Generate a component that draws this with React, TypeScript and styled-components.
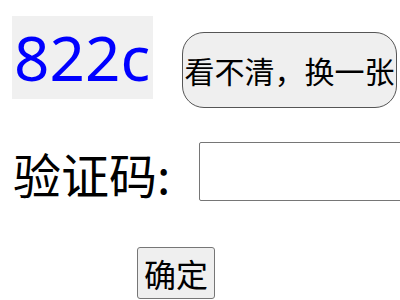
import React from "react";
import styled, { createGlobalStyle } from "styled-components";

const Global = createGlobalStyle`
  html, body { margin: 0; padding: 0; background: #fff; overflow: hidden; }
  body { font-family: "Noto Sans CJK SC", "Noto Sans", sans-serif; }
`;

const Page = styled.div`
  width: 400px;
  height: 300px;
  overflow: hidden;
  padding: 16px 0 0 12px;
  box-sizing: border-box;
  display: flex;
  flex-direction: column;
`;

const CaptchaRow = styled.div`
  display: flex;
  align-items: flex-start;
`;

const CaptchaImage = styled.div`
  width: 141px;
  height: 83px;
  background: #f0f0f0;
  color: #0000ff;
  font-family: "Noto Sans", "Open Sans", sans-serif;
  font-size: 62px;
  line-height: 83px;
  padding-left: 2px;
  box-sizing: border-box;
  white-space: nowrap;
  flex-shrink: 0;
`;

const RefreshButton = styled.button`
  margin: 16px 0 0 29px;
  width: 215px;
  height: 76px;
  flex-shrink: 0;
  padding: 0;
  border: 1px solid #555;
  border-radius: 22px;
  background: #efefef;
  color: #000;
  font-family: "Noto Sans CJK SC", sans-serif;
  font-size: 30px;
  line-height: 1;
  white-space: nowrap;
`;

const FieldRow = styled.div`
  display: flex;
  align-items: center;
  margin-top: 34px;
  height: 59px;
`;

const Label = styled.label`
  font-family: "Noto Sans CJK SC", sans-serif;
  font-size: 48px;
  line-height: 59px;
  color: #000;
  margin-left: 1px;
  margin-top: 4px;
  white-space: nowrap;
`;

const CodeInput = styled.input`
  margin-left: 29px;
  width: 240px;
  height: 59px;
  flex-shrink: 0;
  box-sizing: border-box;
  border: 1px solid #767676;
  border-radius: 2px;
  padding: 0 4px;
  font-size: 30px;
`;

const SubmitRow = styled.div`
  display: flex;
  margin-top: 46px;
  padding-left: 125px;
`;

const SubmitButton = styled.button`
  width: 78px;
  height: 52px;
  padding: 0;
  border: 1px solid #767676;
  border-radius: 3px;
  background: #efefef;
  color: #000;
  font-family: "Noto Sans CJK SC", sans-serif;
  font-size: 32px;
  line-height: 1;
`;

export default function App() {
  return (
    <>
      <Global />
      <Page>
        <CaptchaRow>
          <CaptchaImage>822c</CaptchaImage>
          <RefreshButton type="button">看不清，换一张</RefreshButton>
        </CaptchaRow>
        <FieldRow>
          <Label htmlFor="code">验证码:</Label>
          <CodeInput id="code" type="text" />
        </FieldRow>
        <SubmitRow>
          <SubmitButton type="button">确定</SubmitButton>
        </SubmitRow>
      </Page>
    </>
  );
}
